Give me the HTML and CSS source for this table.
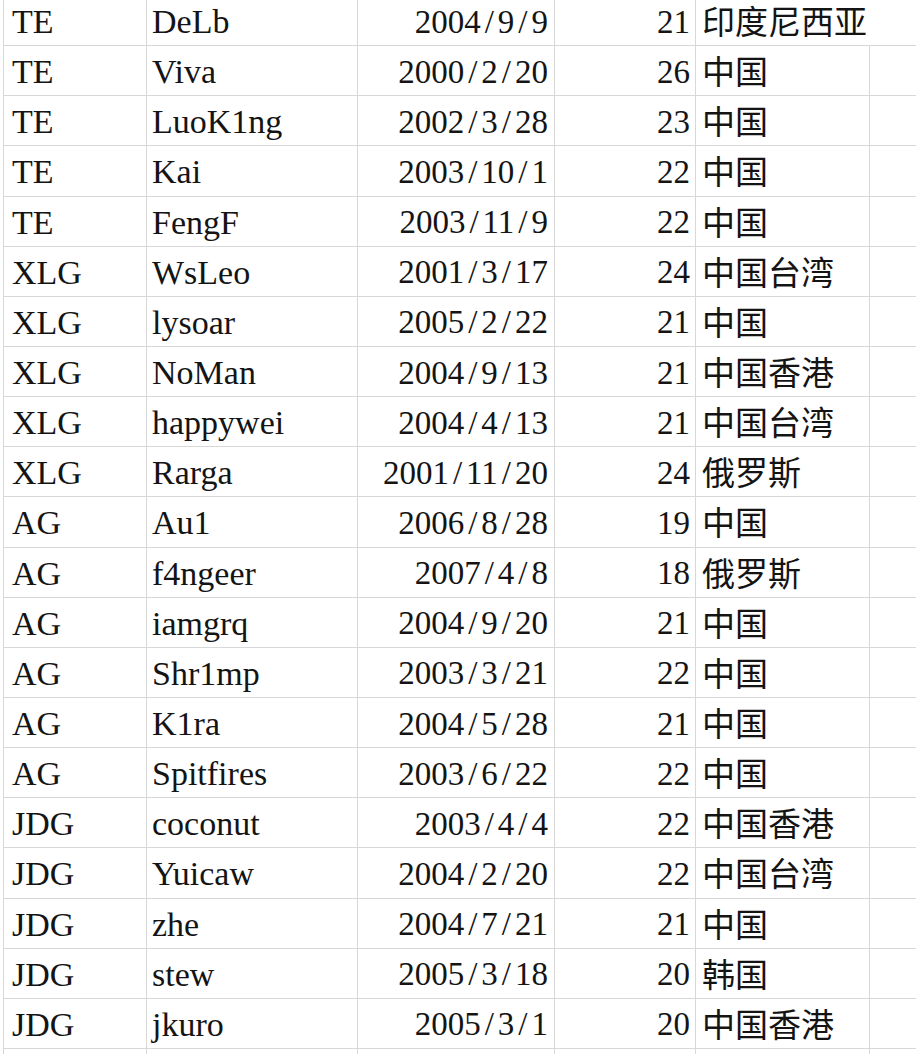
FILE: index.html
```html
<!DOCTYPE html>
<html lang="zh-CN">
<head>
<meta charset="utf-8">
<title>Players</title>
<link rel="stylesheet" href="styles.css">
</head>
<body>
<div class="sheet">
  <div class="c a top">TE</div><div class="c b top">DeLb</div><div class="c d top">2004<span class="sl">/</span>9<span class="sl">/</span>9</div><div class="c n top">21</div><div class="c e wide top">印度尼西亚</div>
  <div class="c a">TE</div><div class="c b">Viva</div><div class="c d">2000<span class="sl">/</span>2<span class="sl">/</span>20</div><div class="c n">26</div><div class="c e">中国</div><div class="c f"></div>
  <div class="c a">TE</div><div class="c b">LuoK1ng</div><div class="c d">2002<span class="sl">/</span>3<span class="sl">/</span>28</div><div class="c n">23</div><div class="c e">中国</div><div class="c f"></div>
  <div class="c a">TE</div><div class="c b">Kai</div><div class="c d">2003<span class="sl">/</span>10<span class="sl">/</span>1</div><div class="c n">22</div><div class="c e">中国</div><div class="c f"></div>
  <div class="c a">TE</div><div class="c b">FengF</div><div class="c d">2003<span class="sl">/</span>11<span class="sl">/</span>9</div><div class="c n">22</div><div class="c e">中国</div><div class="c f"></div>
  <div class="c a">XLG</div><div class="c b">WsLeo</div><div class="c d">2001<span class="sl">/</span>3<span class="sl">/</span>17</div><div class="c n">24</div><div class="c e">中国台湾</div><div class="c f"></div>
  <div class="c a">XLG</div><div class="c b">lysoar</div><div class="c d">2005<span class="sl">/</span>2<span class="sl">/</span>22</div><div class="c n">21</div><div class="c e">中国</div><div class="c f"></div>
  <div class="c a">XLG</div><div class="c b">NoMan</div><div class="c d">2004<span class="sl">/</span>9<span class="sl">/</span>13</div><div class="c n">21</div><div class="c e">中国香港</div><div class="c f"></div>
  <div class="c a">XLG</div><div class="c b">happywei</div><div class="c d">2004<span class="sl">/</span>4<span class="sl">/</span>13</div><div class="c n">21</div><div class="c e">中国台湾</div><div class="c f"></div>
  <div class="c a">XLG</div><div class="c b">Rarga</div><div class="c d">2001<span class="sl">/</span>11<span class="sl">/</span>20</div><div class="c n">24</div><div class="c e">俄罗斯</div><div class="c f"></div>
  <div class="c a">AG</div><div class="c b">Au1</div><div class="c d">2006<span class="sl">/</span>8<span class="sl">/</span>28</div><div class="c n">19</div><div class="c e">中国</div><div class="c f"></div>
  <div class="c a">AG</div><div class="c b">f4ngeer</div><div class="c d">2007<span class="sl">/</span>4<span class="sl">/</span>8</div><div class="c n">18</div><div class="c e">俄罗斯</div><div class="c f"></div>
  <div class="c a">AG</div><div class="c b">iamgrq</div><div class="c d">2004<span class="sl">/</span>9<span class="sl">/</span>20</div><div class="c n">21</div><div class="c e">中国</div><div class="c f"></div>
  <div class="c a">AG</div><div class="c b">Shr1mp</div><div class="c d">2003<span class="sl">/</span>3<span class="sl">/</span>21</div><div class="c n">22</div><div class="c e">中国</div><div class="c f"></div>
  <div class="c a">AG</div><div class="c b">K1ra</div><div class="c d">2004<span class="sl">/</span>5<span class="sl">/</span>28</div><div class="c n">21</div><div class="c e">中国</div><div class="c f"></div>
  <div class="c a">AG</div><div class="c b">Spitfires</div><div class="c d">2003<span class="sl">/</span>6<span class="sl">/</span>22</div><div class="c n">22</div><div class="c e">中国</div><div class="c f"></div>
  <div class="c a">JDG</div><div class="c b">coconut</div><div class="c d">2003<span class="sl">/</span>4<span class="sl">/</span>4</div><div class="c n">22</div><div class="c e">中国香港</div><div class="c f"></div>
  <div class="c a">JDG</div><div class="c b">Yuicaw</div><div class="c d">2004<span class="sl">/</span>2<span class="sl">/</span>20</div><div class="c n">22</div><div class="c e">中国台湾</div><div class="c f"></div>
  <div class="c a">JDG</div><div class="c b">zhe</div><div class="c d">2004<span class="sl">/</span>7<span class="sl">/</span>21</div><div class="c n">21</div><div class="c e">中国</div><div class="c f"></div>
  <div class="c a">JDG</div><div class="c b">stew</div><div class="c d">2005<span class="sl">/</span>3<span class="sl">/</span>18</div><div class="c n">20</div><div class="c e">韩国</div><div class="c f"></div>
  <div class="c a">JDG</div><div class="c b">jkuro</div><div class="c d">2005<span class="sl">/</span>3<span class="sl">/</span>1</div><div class="c n">20</div><div class="c e">中国香港</div><div class="c f"></div>
  <div class="c a"></div><div class="c b"></div><div class="c d"></div><div class="c n"></div><div class="c e"></div><div class="c f"></div>
</div>
</body>
</html>
```

FILE: styles.css
```css
html, body {
  margin: 0;
  padding: 0;
  background: #ffffff;
  overflow: hidden;
}

.sheet {
  display: grid;
  grid-template-columns: 144px 211px 197px 141px 174px 1fr;
  grid-template-rows: 46.15px;
  grid-auto-rows: 50.15px;
  margin-left: 3px;
  width: 913px;
  color: #141414;
}

.c {
  box-sizing: border-box;
  border-right: 1px solid #d8d8d8;
  border-bottom: 1px solid #d8d8d8;
  white-space: nowrap;
  overflow: visible;
  display: flex;
  align-items: center;
  padding-top: 3px;
  font-family: "Liberation Serif", "DejaVu Serif", "Times New Roman", serif;
  font-size: 34px;
  line-height: 1;
}

.a {
  border-left: 1px solid #d8d8d8;
  padding-left: 8px;
}

.b {
  padding-left: 5px;
}

.d {
  justify-content: flex-end;
  padding-right: 6px;
  font-size: 33px;
}

.sl {
  padding: 0 4px;
}

.n {
  justify-content: flex-end;
  padding-right: 5px;
  font-size: 33px;
}

.e {
  padding-left: 6px;
  font-family: "Noto Sans CJK SC", "Noto Sans", sans-serif;
  font-size: 33px;
  font-weight: 400;
  padding-top: 0;
}

.c.top {
  padding-top: 0;
  padding-bottom: 1px;
}

.e.top {
  padding-top: 0;
  padding-bottom: 4px;
}

.wide {
  grid-column: span 2;
  border-right: none;
}

.f {
  border-right: none;
}
```
